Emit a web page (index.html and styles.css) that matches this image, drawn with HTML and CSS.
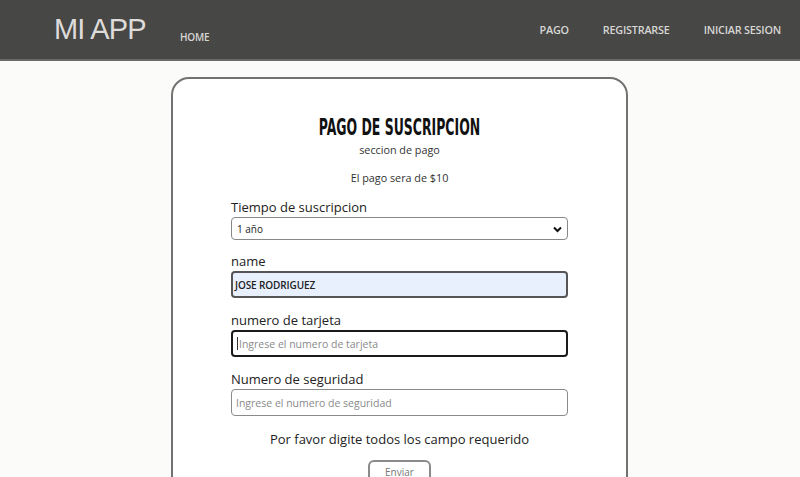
FILE: index.html
```html
<!DOCTYPE html>
<html lang="es">
<head>
<meta charset="utf-8">
<title>MI APP</title>
<link rel="stylesheet" href="styles.css">
</head>
<body>
<header class="nav">
  <div class="nav-left">
    <span class="brand">MI APP</span>
    <a class="nav-link home" href="#">HOME</a>
  </div>
  <nav class="nav-right">
    <a class="nav-link" href="#">PAGO</a>
    <a class="nav-link" href="#">REGISTRARSE</a>
    <a class="nav-link" href="#">INICIAR SESION</a>
  </nav>
</header>
<main class="page">
  <section class="card">
    <h1 class="title">PAGO DE SUSCRIPCION</h1>
    <p class="subtitle">seccion de pago</p>
    <p class="price">El pago sera de $10</p>
    <form class="form">
      <label class="label">Tiempo de suscripcion</label>
      <div class="select">
        <span>1 año</span>
        <svg class="chev" width="9" height="7" viewBox="0 0 9 7"><path d="M1 1.5 L4.5 5 L8 1.5" fill="none" stroke="#111" stroke-width="2"/></svg>
      </div>
      <label class="label">name</label>
      <div class="input filled">JOSE RODRIGUEZ</div>
      <label class="label">numero de tarjeta</label>
      <div class="input focused"><span class="caret"></span><span class="ph">Ingrese el numero de tarjeta</span></div>
      <label class="label">Numero de seguridad</label>
      <div class="input"><span class="ph">Ingrese el numero de seguridad</span></div>
      <p class="msg">Por favor digite todos los campo requerido</p>
      <div class="actions"><button type="button" class="btn">Enviar</button></div>
    </form>
  </section>
</main>
</body>
</html>
```
FILE: styles.css
```css
* { box-sizing: border-box; }
html, body { margin: 0; padding: 0; }
body {
  background: #fbfbf9;
  font-family: "Open Sans", "Liberation Sans", sans-serif;
  color: #222;
  height: 477px;
  overflow: hidden;
}
.nav {
  height: 61px;
  background: #474745;
  border-bottom: 2px solid #6a6a68;
  display: flex;
  justify-content: space-between;
  align-items: center;
}
.nav-left {
  display: flex;
  align-items: center;
  padding-left: 54px;
}
.brand {
  font-family: "Liberation Sans", Arial, sans-serif;
  font-size: 29px;
  letter-spacing: -0.8px;
  color: #dedcda;
}
.nav-link {
  font-family: "Open Sans", sans-serif;
  font-size: 10.8px;
  color: #d6d6d4;
  text-decoration: none;
  font-weight: 600;
  letter-spacing: -0.2px;
}
.home { margin-left: 34px; margin-top: 14px; font-size: 10px; }
.nav-right {
  display: flex;
  gap: 34px;
  padding-right: 19px;
  margin-top: -1px;
}
.page {
  display: flex;
  justify-content: center;
  padding-top: 16px;
}
.card {
  width: 457px;
  margin-left: -1px;
  background: #fff;
  border: 2px solid #727272;
  border-radius: 18px;
  padding: 34px 58px 40px;
  height: 460px;
}
.title {
  margin: 0;
  text-align: center;
  font-family: "DejaVu Sans Condensed", "DejaVu Sans", sans-serif;
  font-weight: 700;
  font-stretch: condensed;
  font-size: 23.5px;
  line-height: 28px;
  color: #111;
  transform: scaleX(0.59);
}
.subtitle {
  margin: 2px 0 0;
  text-align: center;
  font-size: 10.8px;
  line-height: 14px;
  color: #333;
}
.price {
  margin: 14px 0 0;
  text-align: center;
  font-size: 10.8px;
  line-height: 14px;
  color: #333;
}
.form { display: flex; flex-direction: column; margin-top: 14px; }
.label {
  font-size: 13px;
  line-height: 16px;
  color: #222;
  margin-bottom: 2px;
}
.select {
  height: 23px;
  border: 1px solid #888;
  border-radius: 4px;
  display: flex;
  align-items: center;
  justify-content: space-between;
  padding: 0 5px;
  font-size: 10px;
  color: #222;
  margin-bottom: 13px;
}
.chev { margin-top: 1px; }
.input {
  height: 27px;
  border: 1.5px solid #8a8a8a;
  border-radius: 4px;
  display: flex;
  align-items: center;
  padding: 0 4px;
  font-size: 10.5px;
  color: #222;
  margin-bottom: 14px;
}
.filled {
  background: #e8f0fe;
  border: 2px solid #555;
  font-weight: 600;
  font-size: 10px;
  letter-spacing: -0.1px;
  padding-left: 2px;
}
.focused {
  border: 2px solid #1a1a1a;
}
.caret {
  width: 1px;
  height: 13px;
  background: #333;
  margin-right: 1px;
}
.ph { color: #8a8a8a; }
.msg {
  margin: 0;
  text-align: center;
  font-size: 13px;
  line-height: 18px;
  color: #222;
}
.actions { display: flex; justify-content: center; margin-top: 12px; }
.btn {
  width: 63px;
  height: 26px;
  background: #fff;
  border: 2px solid #8a8a8a;
  border-radius: 6px;
  font-family: "Open Sans", sans-serif;
  font-size: 10px;
  color: #777;
  padding: 0 0 2px;
}
```
